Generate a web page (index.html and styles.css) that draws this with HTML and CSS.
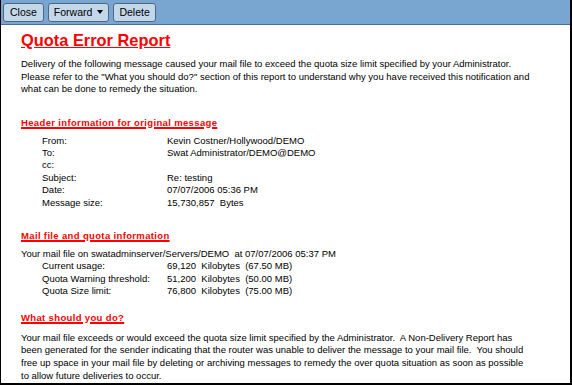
FILE: index.html
```html
<!DOCTYPE html>
<html>
<head>
<meta charset="utf-8">
<link rel="stylesheet" href="styles.css">
</head>
<body>
<div class="frame">
  <div class="toolbar">
    <button class="btn btn-close">Close</button>
    <button class="btn">Forward <span class="caret"></span></button>
    <button class="btn">Delete</button>
  </div>
  <div class="content">
    <h1 class="title">Quota Error Report</h1>
    <p class="para">Delivery of the following message caused your mail file to exceed the quota size limit specified by your Administrator.<br>Please refer to the "What you should do?" section of this report to understand why you have received this notification and<br>what can be done to remedy the situation.</p>

    <h2 class="section">Header information for original message</h2>
    <div class="rows">
      <div class="row"><span class="label">From:</span><span>Kevin Costner/Hollywood/DEMO</span></div>
      <div class="row"><span class="label">To:</span><span>Swat Administrator/DEMO@DEMO</span></div>
      <div class="row"><span class="label">cc:</span><span></span></div>
      <div class="row"><span class="label">Subject:</span><span>Re: testing</span></div>
      <div class="row"><span class="label">Date:</span><span>07/07/2006 05:36 PM</span></div>
      <div class="row"><span class="label">Message size:</span><span>15,730,857&nbsp; Bytes</span></div>
    </div>

    <h2 class="section">Mail file and quota information</h2>
    <div class="line">Your mail file on swatadminserver/Servers/DEMO&nbsp; at 07/07/2006 05:37 PM</div>
    <div class="rows">
      <div class="row"><span class="label">Current usage:</span><span>69,120&nbsp; Kilobytes&nbsp; (67.50 MB)</span></div>
      <div class="row"><span class="label">Quota Warning threshold:</span><span>51,200&nbsp; Kilobytes&nbsp; (50.00 MB)</span></div>
      <div class="row"><span class="label">Quota Size limit:</span><span>76,800&nbsp; Kilobytes&nbsp; (75.00 MB)</span></div>
    </div>

    <h2 class="section section-last">What should you do?</h2>
    <p class="para para-last">Your mail file exceeds or would exceed the quota size limit specified by the Administrator.&nbsp; A Non-Delivery Report has<br>been generated for the sender indicating that the router was unable to deliver the message to your mail file.&nbsp; You should<br>free up space in your mail file by deleting or archiving messages to remedy the over quota situation as soon as possible<br>to allow future deliveries to occur.</p>
  </div>
</div>
</body>
</html>
```

FILE: styles.css
```css
html, body {
  margin: 0;
  padding: 0;
  background: #ffffff;
}
body {
  font-family: "Liberation Sans", Arial, sans-serif;
  font-size: 9.5px;
  color: #000;
}
.frame {
  width: 572px;
  height: 385px;
  box-sizing: border-box;
  border-left: 1px solid #000;
  border-right: 2px solid #000;
  border-bottom: 2px solid #000;
  overflow: hidden;
}
.toolbar {
  height: 24px;
  background: #78a6d0;
  border-bottom: 1px solid #4e7090;
  display: flex;
  align-items: center;
  gap: 4px;
  padding-left: 2px;
}
.btn {
  height: 19px;
  padding: 0 5px;
  background: #c3d7ea;
  border: 1px solid #4f6683;
  border-radius: 3px;
  font-family: "Liberation Sans", Arial, sans-serif;
  font-size: 10.5px;
  color: #000;
  display: flex;
  align-items: center;
  gap: 5px;
}
.btn-close {
  padding: 0 6px;
}
.caret {
  width: 0;
  height: 0;
  border-left: 3px solid transparent;
  border-right: 3px solid transparent;
  border-top: 4px solid #000;
}
.content {
  padding-left: 20px;
}
.title {
  margin: 6px 0 0 0;
  font-size: 16.4px;
  font-weight: bold;
  color: #ff0000;
  text-decoration: underline;
  line-height: 19px;
}
.para {
  margin: 8px 0 0 0;
  line-height: 12.5px;
}
.para-last {
  line-height: 12.7px;
}
.section {
  margin: 20px 0 6px 0;
  font-size: 9.5px;
  font-weight: bold;
  color: #ff0000;
  text-decoration: underline;
  text-decoration-thickness: 1.5px;
  letter-spacing: 0.35px;
  line-height: 13px;
}
.section-last {
  margin-top: 13px;
}
.rows {
  padding-left: 21px;
}
.row {
  display: flex;
  line-height: 12.4px;
}
.label {
  width: 125px;
  flex: none;
}
.line {
  line-height: 12.5px;
}
```
